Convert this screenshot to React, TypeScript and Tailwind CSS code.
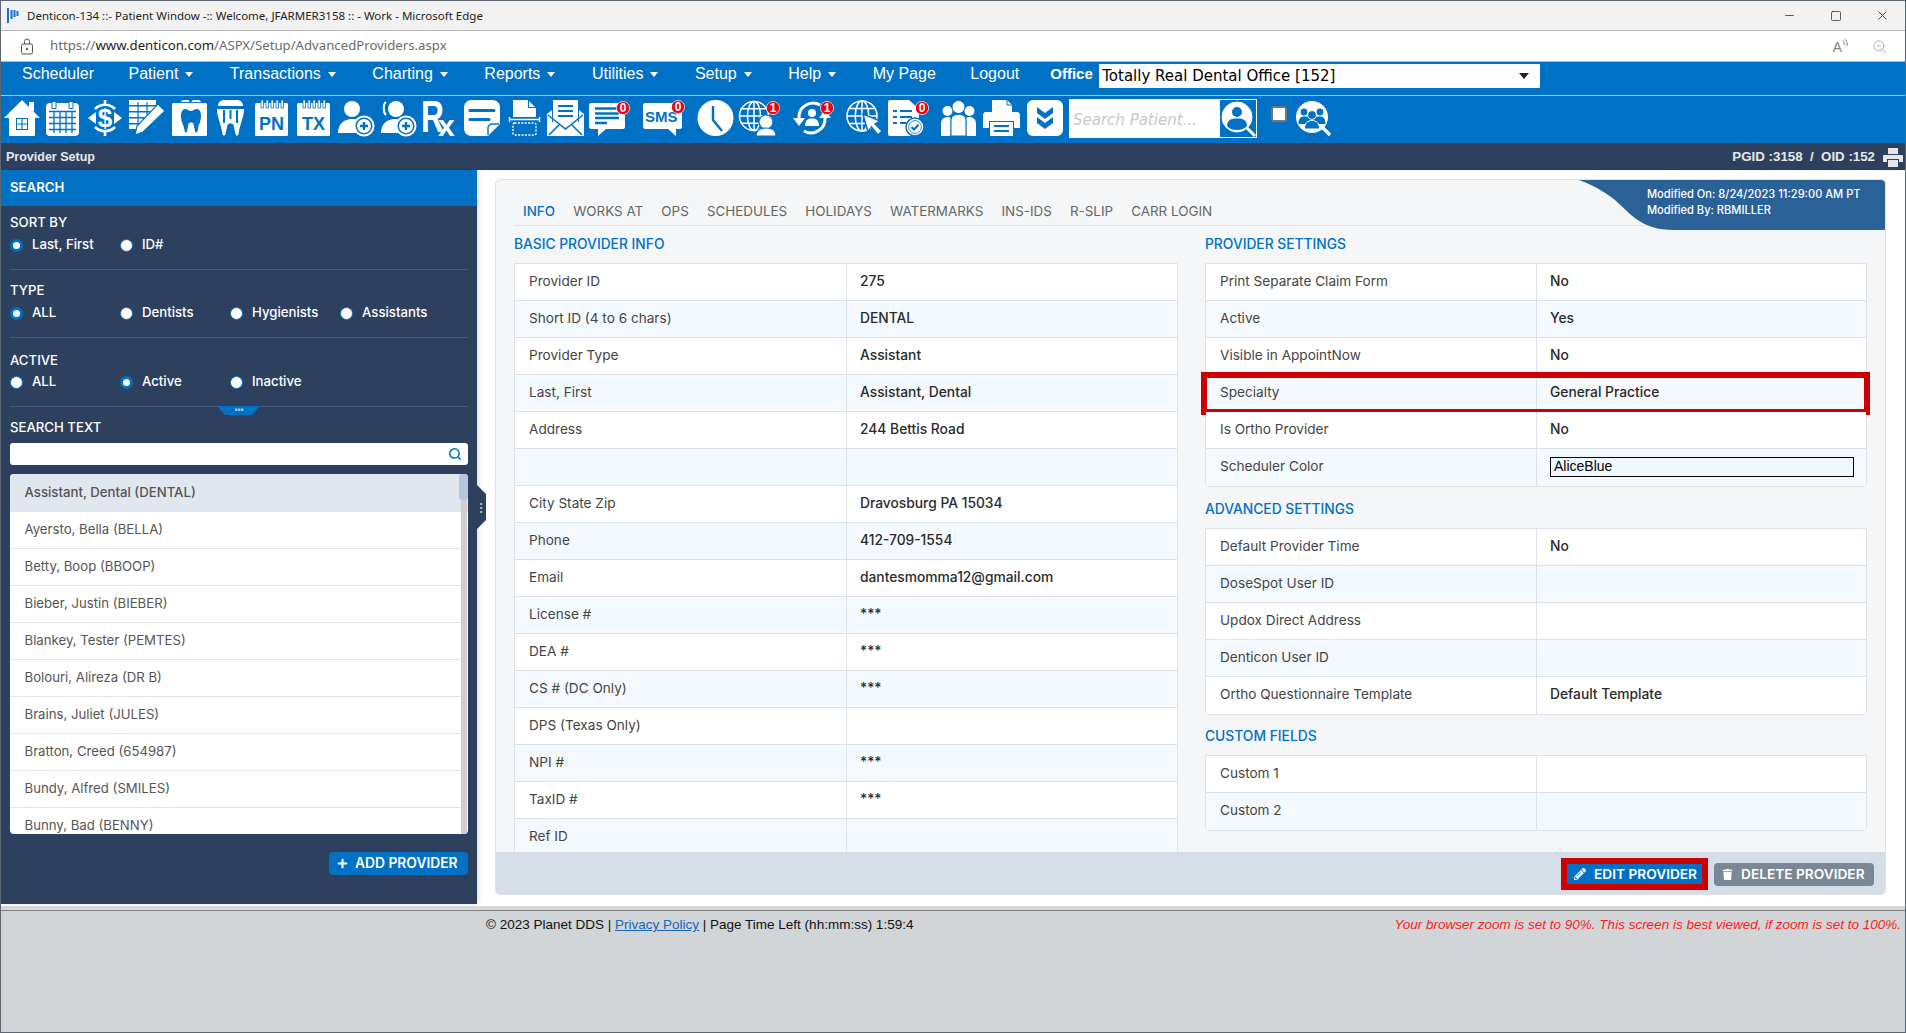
import type { ReactNode } from "react";
import { Minus, Square, X, ZoomOut, Search } from "lucide-react";
import { FaPencilAlt, FaPlus, FaTrash } from "react-icons/fa";

const B = "#0071c5";

function Ico({ w, className, children }: { w: number; className?: string; children: ReactNode }) {
  return (
    <svg width={w} height={36} viewBox={`0 0 ${w} 36`} fill="#fff" className={`shrink-0 overflow-visible ${className ?? ""}`}>
      {children}
    </svg>
  );
}

function Badge({ x, y, n }: { x: number; y: number; n: string }) {
  return (
    <g>
      <circle cx={x} cy={y} r={6.6} fill="#e30613" stroke="#fff" strokeWidth={0.7} />
      <text x={x} y={y + 4.2} textAnchor="middle" fontSize={12} fontWeight={700} fontFamily="Liberation Sans" fill="#fff">
        {n}
      </text>
    </g>
  );
}

function Globe({ cx, cy, r }: { cx: number; cy: number; r: number }) {
  return (
    <g fill="none" stroke="#fff" strokeWidth={1.5}>
      <circle cx={cx} cy={cy} r={r} />
      <ellipse cx={cx} cy={cy} rx={r * 0.45} ry={r} />
      <path d={`M${cx} ${cy - r}V${cy + r}M${cx - r} ${cy}H${cx + r}M${cx - r * 0.85} ${cy - r * 0.5}H${cx + r * 0.85}M${cx - r * 0.85} ${cy + r * 0.5}H${cx + r * 0.85}`} />
    </g>
  );
}

function Toolbar() {
  return (
    <div className="flex h-[47px] items-start bg-[#0071c5] pl-[3px] pt-[4px]">
      <Ico w={36}>
        <path d="M18 0 36 18H31V36H5V18H0L18 0Z" />
        <rect x="25" y="2" width="5" height="9" />
        <rect x="12" y="18" width="12" height="12" fill={B} />
        <path d="M13 19h4.400v4.400H13zM18.600 19H23v4.400h-4.400zM13 24.600h4.400V29H13zM18.600 24.600H23V29h-4.400z" />
      </Ico>
      <Ico w={33} className="ml-[6px]">
        <rect y="3" width="33" height="33" rx="4" />
        <path d="M6 1.500h4v7H6zM23 1.500h4v7h-4z" stroke={B} strokeWidth="1" />
        <path d="M3 11.500H30M3 17.500H30M3 23.500H30M3 29.500H30M8 12V33M14 12V33M20 12V33M26 12V33" stroke={B} strokeWidth="1.3" fill="none" />
      </Ico>
      <Ico w={34} className="ml-[9px]">
        <path d="M17 0v6M17 30v6M7 9A14 14 0 0 1 27 9M7 27A14 14 0 0 0 27 27" stroke="#fff" strokeWidth="2.600" fill="none" />
        <path d="M0 18 8 12V24ZM34 18 26 12V24Z" />
        <text x="17" y="27" textAnchor="middle" fontSize="26" fontWeight="700" fontFamily="Liberation Sans">$</text>
      </Ico>
      <Ico w={36} className="ml-[7px]">
        <path d="M0 0H27V5H0ZM0 6.500H27V11H0ZM0 12.500H20V17H0ZM0 18.500H14V23H0ZM0 24.500H9V29H0Z" />
        <path d="M9 2V29M18 2V15" stroke={B} strokeWidth="1.2" />
        <path d="M29 4 36 11 14 32 6 35 8 26Z" stroke={B} strokeWidth="1.2" />
      </Ico>
      <Ico w={35} className="ml-[7px]">
        <rect y="3" width="35" height="33" rx="1.500" />
        <path d="M9 3C9 1 10 0 12 0H16C17 0 17.500 1 17.500 3ZM19.500 3C19.500 1 20 0 21.500 0H26C28 0 29 1 29 3Z" />
        <path d="M9 2.600H29" stroke={B} strokeWidth="1" />
        <path fill={B} d="M13 9C16 9 16.500 11 19 11C21.500 11 22 9 25 9C28 9 29 13 29 16C29 22 26.500 24 25.500 31C25.200 33 23.500 33 23 31L21.500 24C21 22 17 22 16.500 24L15 31C14.500 33 13 33 12.700 31C11.500 24 9 22 9 16C9 13 10 9 13 9Z" />
      </Ico>
      <Ico w={27} className="ml-[10px]">
        <path d="M1 6C1 2 4 0 7 0H20C23 0 26 2 26 6Z" />
        <path d="M0 9H27C27 17 23.500 22 21.500 34C21 36 19 36 18.500 34L16.500 25C16 23 11 23 10.500 25L8.500 34C8 36 6 36 5.500 34C3.500 22 0 17 0 9Z" />
        <path d="M7 10V23M13.500 10V19M20 10V23" stroke={B} strokeWidth="2" />
      </Ico>
      {[
        { label: "PN", ml: "ml-[11px]" },
        { label: "TX", ml: "ml-[9px]" },
      ].map((c) => (
        <Ico key={c.label} w={33} className={c.ml}>
          <rect y="3" width="33" height="33" rx="1.500" />
          <path d="M6 0h2.500v8H6zM11 0h2.500v8H11zM16 0h2.500v8H16zM21 0h2.500v8H21zM26 0h2.500v8H26z" stroke={B} strokeWidth="0.8" />
          <text x="16.500" y="30" textAnchor="middle" fontSize="18" fontWeight="700" fontFamily="Liberation Sans" fill={B}>{c.label}</text>
        </Ico>
      ))}
      <Ico w={36} className="ml-[8px]">
        <circle cx="14" cy="9" r="8" />
        <path d="M0 33C0 24 6 19 14 19C19 19 22 21 24 23C19 26 17 30 18 33Z" />
        <circle cx="26" cy="26" r="9.500" stroke="#fff" strokeWidth="2" fill={B} />
        <circle cx="26" cy="26" r="7" />
        <path d="M26 22V30M22 26H30" stroke={B} strokeWidth="2.400" />
      </Ico>
      <Ico w={36} className="ml-[6px]">
        <circle cx="16" cy="9" r="8" />
        <path d="M6 2C3 4 3 12 6 15" stroke="#fff" strokeWidth="2" fill="none" />
        <path d="M1 33C1 24 7 19 15 19C19 19 22 21 24 23C19 26 17 30 18 33Z" />
        <circle cx="26" cy="26" r="9.500" stroke="#fff" strokeWidth="2" fill={B} />
        <circle cx="26" cy="26" r="7" />
        <path d="M26 22V30M22 26H30" stroke={B} strokeWidth="2.400" />
      </Ico>
      <Ico w={33} className="ml-[7px]">
        <text transform="translate(-2 32) scale(0.72 1)" fontSize="44" fontWeight="700" fontFamily="Liberation Sans">R</text>
        <text x="15" y="36" fontSize="30" fontWeight="700" fontFamily="Liberation Sans">x</text>
      </Ico>
      <Ico w={36} className="ml-[8px]">
        <path d="M8 0H28C33 0 36 3 36 8V24L24 36H8C3 36 0 33 0 28V8C0 3 3 0 8 0Z" />
        <path d="M6 10.500H30M6 19.500H25" stroke={B} strokeWidth="3.200" strokeLinecap="round" />
        <path d="M24 35V28C24 26 26 24 28 24H35" stroke={B} strokeWidth="1.400" fill="none" />
      </Ico>
      <Ico w={31} className="ml-[9px]">
        <path d="M4 0H19L27 8V17H4Z" />
        <path d="M19.500 0V7.500H27" stroke={B} strokeWidth="1.200" fill="none" />
        <path d="M0.500 17V22M30.500 17V22M0.500 19.500H30.500" stroke="#fff" strokeWidth="1.400" />
        <rect x="4" y="23" width="23" height="12" rx="1.500" fill="none" stroke="#fff" strokeWidth="1.400" strokeDasharray="2 1.400" />
      </Ico>
      <Ico w={37} className="ml-[7px]">
        <path d="M6 0H31V22H6Z" />
        <path d="M11 6H26M11 11H26M11 16H26" stroke={B} strokeWidth="2" />
        <path d="M0 36V14L5 10V22H32V10L37 14V36Z" />
        <path d="M1 15 18.500 29 36 15M2 35 12 25M35 35 25 25" stroke={B} strokeWidth="1.600" fill="none" />
      </Ico>
      <Ico w={41} className="ml-[5px]">
        <path d="M2 3H34C35 3 36 4 36 5V27C36 28 35 29 34 29H17L9 36V29H2C1 29 0 28 0 27V5C0 4 1 3 2 3Z" />
        <path d="M6 8.500H30M6 13.500H30M6 18H30M6 23H18" stroke={B} strokeWidth="2.400" />
        <Badge x={34} y={8} n="0" />
      </Ico>
      <Ico w={41} className="ml-[13px]">
        <path d="M2 3H37C38 3 39 4 39 5V27C39 28 38 29 37 29H33V36L25 29H2C1 29 0 28 0 27V5C0 4 1 3 2 3Z" />
        <text x="2" y="22" fontSize="15" fontWeight="700" fontFamily="Liberation Sans" fill={B}>SMS</text>
        <Badge x={35} y={7} n="0" />
      </Ico>
      <Ico w={37} className="ml-[13px]">
        <circle cx="18.500" cy="18" r="18" />
        <path d="M16 6V20L25 31" stroke={B} strokeWidth="2.400" fill="none" />
      </Ico>
      <Ico w={40} className="ml-[5px]">
        <Globe cx={15} cy={16} r={14.5} />
        <circle cx="27" cy="22" r="7" stroke={B} strokeWidth="1.200" />
        <path d="M17 36C17 30 21 28 27 28C33 28 37 30 37 36Z" stroke={B} strokeWidth="1.200" />
        <Badge x={34} y={8} n="1" />
      </Ico>
      <Ico w={42} className="ml-[13px]">
        <path d="M7 18A14 14 0 0 1 28 5M33 18A14 14 0 0 1 12 31" stroke="#fff" strokeWidth="3" fill="none" />
        <path d="M1 18H13L7 26ZM39 18H27L33 10Z" />
        <circle cx="20" cy="13" r="4" />
        <path d="M13 26C13 20 16 18.500 20 18.500C24 18.500 27 20 27 26Z" />
        <Badge x={35} y={8} n="1" />
      </Ico>
      <Ico w={36} className="ml-[12px]">
        <Globe cx={16} cy={16} r={15} />
        <path d="M17 14 22 32 25.500 27 32 35 36 31 29 24 34 21Z" stroke={B} strokeWidth="1.400" />
      </Ico>
      <Ico w={40} className="ml-[6px]">
        <path d="M2 0H21L31 9V36H2C1 36 0 35 0 34V2C0 1 1 0 2 0Z" />
        <path d="M5 11H9M12 11H24M5 17H9M12 17H24M5 23H9M12 23H18" stroke={B} strokeWidth="2" />
        <circle cx="27" cy="27" r="9" stroke={B} strokeWidth="1.500" />
        <circle cx="27" cy="27" r="6.400" fill="#fff" stroke={B} strokeWidth="0.800" />
        <path d="M23.500 27 26 29.500 30.500 24.800" stroke={B} strokeWidth="2" fill="none" />
        <Badge x={34} y={8} n="0" />
      </Ico>
      <Ico w={35} className="ml-[13px]">
        <circle cx="6.500" cy="11" r="5" />
        <circle cx="28.500" cy="11" r="5" />
        <path d="M0 36V24C0 19 3 17 6.500 17C8 17 9 17.300 9.500 18V36ZM35 36V24C35 19 32 17 28.500 17C27 17 26 17.300 25.500 18V36Z" />
        <circle cx="17.500" cy="7" r="6.500" stroke={B} strokeWidth="1" />
        <path d="M10 36V21C10 16 13 14.500 17.500 14.500C22 14.500 25 16 25 21V36Z" stroke={B} strokeWidth="1" />
      </Ico>
      <Ico w={37} className="ml-[7px]">
        <path d="M9 0H24L29 5V12H9Z" />
        <path d="M24 0V5H29" stroke={B} strokeWidth="1" fill="none" />
        <path d="M3 12H34C36 12 37 13.500 37 15V28H31V21H6V28H0V15C0 13.500 1 12 3 12Z" />
        <path d="M7 22H30V36H7Z" />
        <path d="M11 26H26M11 31H26" stroke={B} strokeWidth="2" />
      </Ico>
      <Ico w={36} className="ml-[7px]">
        <rect width="36" height="36" rx="6" />
        <path d="M10 7 18 13 26 7V13L18 19 10 13ZM10 17 18 23 26 17V23L18 29 10 23Z" fill={B} />
      </Ico>
      <div className="-mt-[1px] ml-[6px] flex h-[39px] w-[188px] shrink-0 items-stretch bg-white">
        <input
          readOnly
          placeholder="Search Patient..."
          className="min-w-0 flex-1 bg-white pl-[4px] pt-[3px] font-['DejaVu_Sans',sans-serif] text-[15px] italic text-[#333] outline-none placeholder:text-[#c9c9c9]"
        />
        <svg width="37" height="39" viewBox="0 0 37 39" className="shrink-0">
          <rect width="36" height="37" y="1" fill={B} />
          <circle cx="17" cy="18" r="15" fill="#fff" stroke="#fff" />
          <path d="M27 29 35 37" stroke="#fff" strokeWidth="3" />
          <circle cx="17" cy="13" r="5" fill={B} />
          <path d="M7 27C7 21 11 19.500 17 19.500C23 19.500 27 21 27 27C24 30 20 31 17 31C13 31 10 30 7 27Z" fill={B} />
        </svg>
      </div>
      <div className="ml-[14px] mt-[6px] h-4 w-4 shrink-0 rounded-[3px] border-2 border-[#767676] bg-white" />
      <Ico w={36} className="ml-[8px]">
        <circle cx="17" cy="17" r="16" />
        <path d="M27 27 35 35" stroke="#fff" strokeWidth="3.400" />
        <circle cx="9" cy="12" r="3.400" fill={B} />
        <circle cx="25" cy="12" r="3.400" fill={B} />
        <path d="M3.500 24C3.500 18 6 16.500 9 16.500H25C28 16.500 30.500 18 30.500 24Z" fill={B} />
        <circle cx="17" cy="15" r="4.400" fill={B} stroke="#fff" />
        <path d="M9.500 29C9.500 23 13 20.500 17 20.500C21 20.500 24.500 23 24.500 29Z" fill={B} stroke="#fff" />
      </Ico>
    </div>
  );
}

const navItems = [
  { label: "Scheduler", arrow: false, cls: "mr-[34.5px]" },
  { label: "Patient", arrow: true, cls: "mr-[36.5px]" },
  { label: "Transactions", arrow: true, cls: "mr-[36.5px]" },
  { label: "Charting", arrow: true, cls: "mr-[36.5px]" },
  { label: "Reports", arrow: true, cls: "mr-[36.5px]" },
  { label: "Utilities", arrow: true, cls: "mr-[36.5px]" },
  { label: "Setup", arrow: true, cls: "mr-[36.5px]" },
  { label: "Help", arrow: true, cls: "mr-[36.5px]" },
  { label: "My Page", arrow: false, cls: "mr-[34.5px]" },
  { label: "Logout", arrow: false, cls: "mr-[31px]" },
];

function Nav() {
  return (
    <div className="flex h-[34px] items-start border-b border-[#9ecbea] bg-[#0071c5] pl-[21px] pt-[2px] font-['Liberation_Sans',sans-serif] text-[16px] text-white">
      {navItems.map((n) => (
        <div key={n.label} className={`flex h-5 items-center ${n.cls}`}>
          <span>{n.label}</span>
          {n.arrow && <span className="ml-[7px] h-0 w-0 border-x-[4px] border-t-[5px] border-x-transparent border-t-white" />}
        </div>
      ))}
      <span className="h-5 w-[49px] text-[15px] font-bold leading-5">Office</span>
      <div className="flex h-6 w-[441px] items-center justify-between bg-white pl-[3px] pr-[11px] font-['DejaVu_Sans',sans-serif] text-[15px] text-black">
        <span>Totally Real Dental Office [152]</span>
        <span className="h-0 w-0 border-x-[5px] border-t-[6px] border-x-transparent border-t-[#222]" />
      </div>
    </div>
  );
}

function Radio({ label, on }: { label: string; on?: boolean }) {
  return (
    <div className="flex w-[110px] shrink-0 items-center">
      <span className={`h-[13px] w-[13px] rounded-full bg-white ${on ? "border-[3px] border-[#0071c5]" : "border border-[#0071c5]"}`} />
      <span className="ml-[9px]">{label}</span>
    </div>
  );
}

const providers = [
  "Ayersto, Bella (BELLA)",
  "Betty, Boop (BBOOP)",
  "Bieber, Justin (BIEBER)",
  "Blankey, Tester (PEMTES)",
  "Bolouri, Alireza (DR B)",
  "Brains, Juliet (JULES)",
  "Bratton, Creed (654987)",
  "Bundy, Alfred (SMILES)",
  "Bunny, Bad (BENNY)",
];

function Sidebar() {
  return (
    <aside className="relative h-[734px] w-[476px] shrink-0 bg-[#2d415f] text-[13.2px] font-medium text-white shadow-[2px_0_4px_rgba(0,0,0,0.12)]">
      <div className="flex h-9 items-center bg-[#0071c5] pl-[9px] font-semibold">SEARCH</div>
      <div className="mx-[9px]">
        <div className="h-[64px] border-b border-[#4a5c78] pt-[8px]">
          <div className="h-4 leading-4">SORT BY</div>
          <div className="mt-[7px] flex h-4 items-center">
            <Radio label="Last, First" on />
            <Radio label="ID#" />
          </div>
        </div>
        <div className="h-[68px] border-b border-[#4a5c78] pt-[12px]">
          <div className="h-4 leading-4">TYPE</div>
          <div className="mt-[7px] flex h-4 items-center">
            <Radio label="ALL" on />
            <Radio label="Dentists" />
            <Radio label="Hygienists" />
            <Radio label="Assistants" />
          </div>
        </div>
        <div className="h-[69px] border-b border-[#4a5c78] pt-[14px]">
          <div className="h-4 leading-4">ACTIVE</div>
          <div className="mt-[6px] flex h-4 items-center">
            <Radio label="ALL" />
            <Radio label="Active" on />
            <Radio label="Inactive" />
          </div>
        </div>
        <div className="mt-[12px] h-4 leading-4">SEARCH TEXT</div>
        <div className="mt-[8px] flex h-[22px] items-center justify-end rounded-[3px] bg-white pr-[6px]">
          <Search size={14} strokeWidth={2.6} color="#0071c5" />
        </div>
        <div className="relative mt-[9px] h-[360px] overflow-hidden rounded-[4px] bg-white font-normal text-[#555]">
          <div className="flex h-[38px] items-center border-b border-[#e2e6ea] bg-[#e1e7ef] pl-[14.5px] font-medium">Assistant, Dental (DENTAL)</div>
          {providers.map((p) => (
            <div key={p} className="flex h-[37px] items-center border-b border-[#e2e6ea] pl-[14.5px]">{p}</div>
          ))}
          <div className="absolute bottom-0 right-[1px] top-0 w-[6px] bg-[#cfcfcf]" />
          <div className="absolute right-0 top-0 h-[26px] w-[9px] rounded-[3px] bg-[#b3c8de]" />
        </div>
        <div className="mt-[18px] flex justify-end">
          <button type="button" className="flex h-[23px] w-[139px] items-center gap-[7px] rounded-[4px] bg-[#0071c5] pl-[8px] text-[13.8px] font-semibold">
            <FaPlus size={11} />
            ADD PROVIDER
          </button>
        </div>
      </div>
      {/* collapse handles */}
      <svg width="43" height="9" viewBox="0 0 43 9" className="absolute left-[216px] top-[236px]">
        <path d="M0 0H43L35 9H8Z" fill="#0071c5" />
        <path d="M18 2.500h2.400v2.400H18zM21 2.500h2.400v2.400H21zM24 2.500h2.400v2.400H24z" fill="#9fc4e6" />
      </svg>
      <svg width="9" height="44" viewBox="0 0 9 44" className="absolute -right-[9px] top-[315px]">
        <path d="M0 0 9 9V35L0 44Z" fill="#2d415f" />
        <path d="M3.200 18h2v2h-2zM3.200 22h2v2h-2zM3.200 26h2v2h-2z" fill="#b4bfcc" />
      </svg>
    </aside>
  );
}

type Row = { label: string; value?: string; box?: boolean; mark?: boolean };

function Table({ rows, first }: { rows: Row[]; first: string }) {
  return (
    <div className="rounded-b-[4px] border border-[#dde2ea]">
      {rows.map((r, i) => (
        <div
          key={r.label + i}
          className={`relative flex h-[37px] ${i % 2 ? "bg-[#f4f9fd]" : "bg-white"} ${i < rows.length - 1 ? "border-b border-[#dde2ea]" : ""}`}
        >
          <div className={`flex ${first} shrink-0 items-center border-r border-[#dde2ea] pb-[2px] pl-[14px] text-[13.6px] text-[#444]`}>{r.label}</div>
          <div className="flex flex-1 items-center pb-[2px] pl-[13px] text-[13.8px] font-medium text-[#2a2a2a]">
            {r.box ? (
              <div className="flex h-5 w-[304px] items-center border border-black bg-[#f0f8ff] pl-[3px] font-['Liberation_Sans',sans-serif] text-[14px] font-normal text-black">{r.value}</div>
            ) : (
              r.value
            )}
          </div>
          {r.mark && <div className="absolute -bottom-[4px] -left-[5px] -right-[4px] -top-[3px] border-[6px] border-[#cc0000]" />}
        </div>
      ))}
    </div>
  );
}

const basicInfo: Row[] = [
  { label: "Provider ID", value: "275" },
  { label: "Short ID (4 to 6 chars)", value: "DENTAL" },
  { label: "Provider Type", value: "Assistant" },
  { label: "Last, First", value: "Assistant, Dental" },
  { label: "Address", value: "244 Bettis Road" },
  { label: "" },
  { label: "City State Zip", value: "Dravosburg PA 15034" },
  { label: "Phone", value: "412-709-1554" },
  { label: "Email", value: "dantesmomma12@gmail.com" },
  { label: "License #", value: "***" },
  { label: "DEA #", value: "***" },
  { label: "CS # (DC Only)", value: "***" },
  { label: "DPS (Texas Only)" },
  { label: "NPI #", value: "***" },
  { label: "TaxID #", value: "***" },
  { label: "Ref ID" },
];

const settings: Row[] = [
  { label: "Print Separate Claim Form", value: "No" },
  { label: "Active", value: "Yes" },
  { label: "Visible in AppointNow", value: "No" },
  { label: "Specialty", value: "General Practice", mark: true },
  { label: "Is Ortho Provider", value: "No" },
  { label: "Scheduler Color", value: "AliceBlue", box: true },
];

const advanced: Row[] = [
  { label: "Default Provider Time", value: "No" },
  { label: "DoseSpot User ID" },
  { label: "Updox Direct Address" },
  { label: "Denticon User ID" },
  { label: "Ortho Questionnaire Template", value: "Default Template" },
];

const custom: Row[] = [{ label: "Custom 1" }, { label: "Custom 2" }];

const tabs = ["INFO", "WORKS AT", "OPS", "SCHEDULES", "HOLIDAYS", "WATERMARKS", "INS-IDS", "R-SLIP", "CARR LOGIN"];

function Title({ children, className }: { children: ReactNode; className?: string }) {
  return <div className={`h-[15px] text-[13.8px] font-medium leading-[15px] text-[#0071c5] ${className ?? ""}`}>{children}</div>;
}

function Card() {
  return (
    <div className="relative ml-[18px] mr-[19px] mt-[9px] flex h-[716px] flex-1 flex-col overflow-hidden rounded-[5px] border border-[#dde2ea] bg-[#f5f6f8] text-[13px]">
      <div className="flex min-h-0 flex-1 flex-col px-[18px]">
        <div className="flex h-[46px] shrink-0 items-end gap-[18.2px] border-b border-[#dde2ea] pb-[6px] pl-[9px] text-[13.4px] leading-[15px] text-[#666]">
          {tabs.map((t, i) => (
            <span key={t} className={i === 0 ? "font-medium text-[#0071c5]" : ""}>{t}</span>
          ))}
        </div>
        <div className="flex min-h-0 flex-1 gap-[27px] pt-[11px]">
          <div className="w-[664px] shrink-0">
            <Title>BASIC PROVIDER INFO</Title>
            <div className="mt-[11px]">
              <Table rows={basicInfo} first="w-[332px]" />
            </div>
          </div>
          <div className="flex-1">
            <Title>PROVIDER SETTINGS</Title>
            <div className="mt-[11px]">
              <Table rows={settings} first="w-[331px]" />
            </div>
            <Title className="mt-[15px]">ADVANCED SETTINGS</Title>
            <div className="mt-[11px]">
              <Table rows={advanced} first="w-[331px]" />
            </div>
            <Title className="mt-[14px]">CUSTOM FIELDS</Title>
            <div className="mt-[11px]">
              <Table rows={custom} first="w-[331px]" />
            </div>
          </div>
        </div>
      </div>
      <div className="z-10 flex h-[42px] shrink-0 items-center justify-end gap-[6px] bg-[#d5dee7] pr-[11px] pt-[2px] text-[13.7px] font-semibold text-white">
        <div className="border-[6px] border-[#cc0000]">
          <button type="button" className="flex h-5 w-[135px] items-center gap-[8px] bg-[#0071c5] pl-[7px]">
            <FaPencilAlt size={12} />
            EDIT PROVIDER
          </button>
        </div>
        <button type="button" className="flex h-[23px] w-[160px] items-center gap-[8px] rounded-[4px] bg-[#7a8896] pl-[8px]">
          <FaTrash size={11} />
          DELETE PROVIDER
        </button>
      </div>
      {/* modified-by flag */}
      <svg width="306" height="50" viewBox="0 0 306 50" className="absolute right-0 top-0">
        <path d="M0 0H306V50H95C62 50 52 34 36 20C26 12 12 4 0 0Z" fill="#2a6196" />
      </svg>
      <div className="absolute left-[1151px] top-[6px] text-[11.1px] font-medium leading-4 text-white">
        <div>Modified On: 8/24/2023 11:29:00 AM PT</div>
        <div>Modified By: RBMILLER</div>
      </div>
    </div>
  );
}

export default function App() {
  return (
    <div className="flex h-[1033px] w-full flex-col overflow-hidden border border-[#5c6670] bg-[#d1d5d8] font-['Inter',sans-serif]">
      <div className="flex h-[30px] shrink-0 items-center border-b border-[#b5b5b5] bg-[#f2f2f2] font-['Noto_Sans',sans-serif] text-[11.5px] text-[#222]">
        <svg width="12" height="15" viewBox="0 0 12 15" className="ml-[6px]">
          <path d="M0 0h2v15H0zM3.500 2h2v9h-2zM6.500 2h2v7h-2zM9.500 3h2v5h-2z" fill="#1b6fc9" />
        </svg>
        <span className="ml-[8px]">Denticon-134 ::- Patient Window -:: Welcome, JFARMER3158 :: - Work - Microsoft Edge</span>
        <div className="ml-auto flex items-center gap-[33.5px] pr-[15px]">
          <Minus size={13} strokeWidth={1.4} />
          <Square size={12} strokeWidth={1.4} />
          <X size={15} strokeWidth={1.3} />
        </div>
      </div>
      <div className="flex h-[31px] shrink-0 items-center border-b border-[#b5b5b5] bg-white font-['Noto_Sans',sans-serif] text-[13.2px] text-[#6b6b6b]">
        <svg width="14" height="17" viewBox="0 0 14 17" fill="none" stroke="#555" className="ml-[19px]">
          <rect x="1.500" y="6" width="11" height="10" rx="1.500" />
          <path d="M4.500 6V3.500a2.500 2.500 0 0 1 5 0V6" />
          <circle cx="7" cy="11" r="0.800" fill="#555" />
        </svg>
        <span className="ml-[16px]">https://<span className="text-[#222]">www.denticon.com</span>/ASPX/Setup/AdvancedProviders.aspx</span>
        <div className="ml-auto flex items-center gap-[24px] pr-[18px] text-[#888]">
          <div className="flex items-start text-[15px] leading-none">
            A
            <svg width="6" height="9" viewBox="0 0 6 9" fill="none" stroke="#888">
              <path d="M0.500 1C2 2 2.500 4 2 6M2.500 0C5 1.500 5.500 4.500 5 7" />
            </svg>
          </div>
          <ZoomOut size={15} strokeWidth={1} />
        </div>
      </div>
      <Nav />
      <Toolbar />
      <div className="flex h-[27px] shrink-0 items-center justify-between bg-[#2d415f] pl-[5px] pr-[2px] pt-[1px] font-['Liberation_Sans',sans-serif] font-bold text-[#e8e8e8]">
        <span className="text-[12.5px]">Provider Setup</span>
        <div className="flex items-center gap-[8px] text-[13.3px]">
          <span>PGID :3158 &nbsp;/ &nbsp;OID :152</span>
          <svg width="20" height="19" viewBox="0 0 20 19" fill="#e6e6e6">
            <path d="M5 0H15V6H5ZM1 7H19C19.500 7 20 7.500 20 8V14H16V11H4V14H0V8C0 7.500 0.500 7 1 7ZM5 12H15V19H5Z" />
          </svg>
        </div>
      </div>
      <div className="flex h-[736px] shrink-0 items-start bg-white">
        <Sidebar />
        <Card />
      </div>
      <div className="h-[4px] shrink-0 bg-[#d5d9dc]" />
      <div className="flex flex-1 items-start border-t border-[#808080] pt-[4px] font-['Liberation_Sans',sans-serif] text-[13.5px] text-[#111]">
        <span className="ml-[485px]">
          © 2023 Planet DDS | <span className="text-[#1565c0] underline">Privacy Policy</span> | Page Time Left (hh:mm:ss) 1:59:4
        </span>
        <span className="ml-auto pr-[4px] italic text-[#ff1a1a]">Your browser zoom is set to 90%. This screen is best viewed, if zoom is set to 100%.</span>
      </div>
    </div>
  );
}
